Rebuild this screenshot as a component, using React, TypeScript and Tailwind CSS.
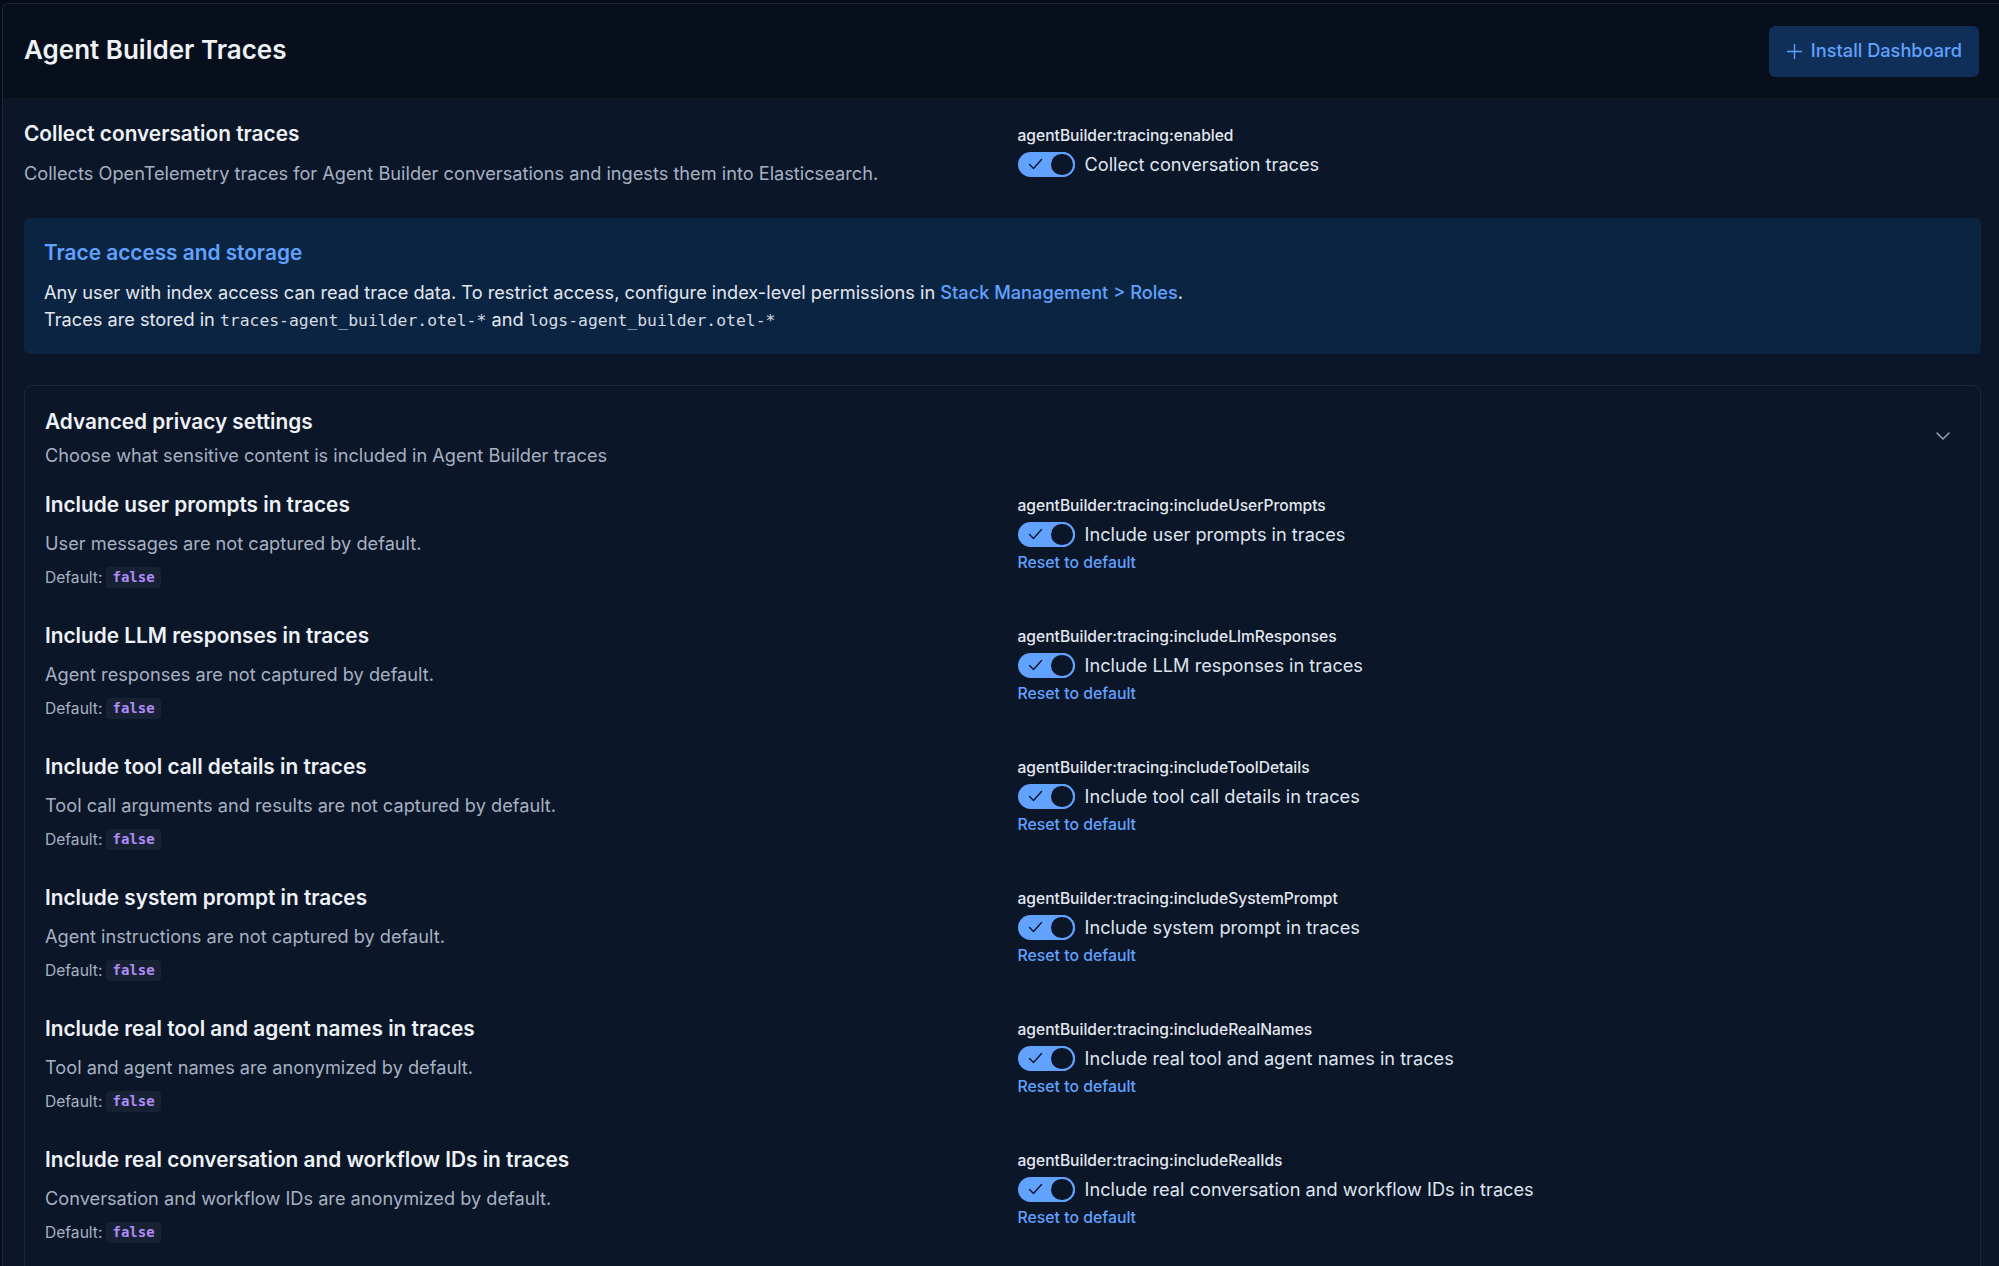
import React from "react";

const settings = [
  {
    title: "Include user prompts in traces",
    description: "User messages are not captured by default.",
    key: "agentBuilder:tracing:includeUserPrompts",
  },
  {
    title: "Include LLM responses in traces",
    description: "Agent responses are not captured by default.",
    key: "agentBuilder:tracing:includeLlmResponses",
  },
  {
    title: "Include tool call details in traces",
    description: "Tool call arguments and results are not captured by default.",
    key: "agentBuilder:tracing:includeToolDetails",
  },
  {
    title: "Include system prompt in traces",
    description: "Agent instructions are not captured by default.",
    key: "agentBuilder:tracing:includeSystemPrompt",
  },
  {
    title: "Include real tool and agent names in traces",
    description: "Tool and agent names are anonymized by default.",
    key: "agentBuilder:tracing:includeRealNames",
  },
  {
    title: "Include real conversation and workflow IDs in traces",
    description: "Conversation and workflow IDs are anonymized by default.",
    key: "agentBuilder:tracing:includeRealIds",
  },
];

const mono = "font-['DejaVu_Sans_Mono','Liberation_Mono',monospace]";

const Toggle = ({ label }: { label: string }) => (
  <div className="flex items-center gap-[10px] h-[25px]">
    <div className="relative w-[57px] h-[25px] rounded-full bg-[#61a2ff] shrink-0">
      <svg
        className="absolute left-[10px] top-[6px]"
        width="15"
        height="13"
        viewBox="0 0 15 13"
        fill="none"
      >
        <path d="M1.5 6.5l4 4 8-9" stroke="#0b1628" strokeWidth="1.4" strokeLinecap="round" strokeLinejoin="round" />
      </svg>
      <div className="absolute right-0 top-0 w-[26px] h-[25px] rounded-full bg-[#0b1628] border-2 border-[#61a2ff]" />
    </div>
    <span className="text-[18.2px] leading-[25px] text-[#dfe5ef]">{label}</span>
  </div>
);

const SettingRow = ({ title, description, settingKey }: { title: string; description: string; settingKey: string }) => (
  <div className="grid grid-cols-2 gap-x-[30px]">
    <div>
      <h4 className="text-[20.8px] leading-[24px] font-semibold text-[#eef2f7]">{title}</h4>
      <p className="mt-[13px] text-[18.2px] leading-[26px] text-[#a7b1c2]">{description}</p>
      <div className="mt-[11px] flex items-center gap-[4px] h-[21px]">
        <span className="text-[15.6px] text-[#a7b1c2]">Default:</span>
        <code className={`${mono} px-[6px] h-[21px] leading-[21px] rounded-[4px] bg-[#172134] text-[14px] font-bold text-[#b08cf7]`}>
          false
        </code>
      </div>
    </div>
    <div className="pt-[3px]">
      <div className="text-[15.6px] leading-[20px] font-medium text-[#e3e8f0]">{settingKey}</div>
      <div className="mt-[6px]">
        <Toggle label={title} />
      </div>
      <div className="mt-[6px] text-[15.8px] leading-[20px] font-medium text-[#61a2ff]">Reset to default</div>
    </div>
  </div>
);

export default function App() {
  return (
    <div className="min-h-screen bg-[#060b15] font-['Inter','Noto_Sans',sans-serif]">
      <div className="ml-[2px] pt-[3px]">
        <div className="min-h-[1263px] bg-[#0b1628] border-l border-t border-[#1c2739] rounded-tl-[6px] overflow-hidden">
          {/* Page header */}
          <header className="h-[94px] flex items-center justify-between pl-[21px] pr-[20px] bg-[#070f1d]">
            <h1 className="text-[26px] font-semibold text-[#eef2f7] pb-[3px]">Agent Builder Traces</h1>
            <button className="flex items-center gap-[8px] h-[51px] px-[17px] rounded-[6px] bg-[#0f2e58] text-[#61a2ff] text-[18.2px] font-medium">
              <svg width="17" height="17" viewBox="0 0 16 16" fill="none">
                <path d="M8 1.5v13M1.5 8h13" stroke="currentColor" strokeWidth="1.3" strokeLinecap="round" />
              </svg>
              Install Dashboard
            </button>
          </header>

          <div className="pl-[21px] pr-[18px]">
            {/* Master switch */}
            <div className="grid grid-cols-2 gap-x-[30px] pt-[24px]">
              <div>
                <h3 className="text-[20.8px] leading-[24px] font-semibold text-[#eef2f7]">Collect conversation traces</h3>
                <p className="mt-[14px] text-[18.2px] leading-[26px] text-[#a7b1c2]">
                  Collects OpenTelemetry traces for Agent Builder conversations and ingests them into Elasticsearch.
                </p>
              </div>
              <div className="pt-[4px]">
                <div className="text-[15.6px] leading-[20px] font-medium text-[#e3e8f0]">agentBuilder:tracing:enabled</div>
                <div className="mt-[6px]">
                  <Toggle label="Collect conversation traces" />
                </div>
              </div>
            </div>

            {/* Info callout */}
            <div className="mt-[32px] rounded-[6px] bg-[#0b2442] px-[20px] pt-[22px] pb-[20px]">
              <h3 className="text-[20.8px] leading-[26px] font-semibold text-[#61a2ff]">Trace access and storage</h3>
              <p className="mt-[13px] text-[18.2px] leading-[27px] text-[#e3e8f0]">
                Any user with index access can read trace data. To restrict access, configure index-level permissions in{" "}
                <a className="text-[#61a2ff] font-medium">Stack Management &gt; Roles</a>.
              </p>
              <p className="text-[18.2px] leading-[27px] text-[#e3e8f0]">
                Traces are stored in <code className={`${mono} text-[16.4px] text-[#d5dbe5]`}>traces-agent_builder.otel-*</code> and{" "}
                <code className={`${mono} text-[16.4px] text-[#d5dbe5]`}>logs-agent_builder.otel-*</code>
              </p>
            </div>

            {/* Advanced privacy accordion */}
            <div className="mt-[31px] rounded-t-[8px] border border-[#1c2739] px-[20px] pt-[24px] pb-[40px]">
              <div className="flex items-start justify-between">
                <div>
                  <h3 className="text-[20.8px] leading-[24px] font-semibold text-[#eef2f7]">Advanced privacy settings</h3>
                  <p className="mt-[8px] text-[18.2px] leading-[26px] text-[#a7b1c2]">
                    Choose what sensitive content is included in Agent Builder traces
                  </p>
                </div>
                <svg className="mt-[17px] mr-[8px]" width="18" height="18" viewBox="0 0 18 18" fill="none">
                  <path d="M3 6l6 6 6-6" stroke="#98a2b3" strokeWidth="1.5" strokeLinecap="round" strokeLinejoin="round" />
                </svg>
              </div>

              <div className="mt-[25px] flex flex-col gap-[36px]">
                {settings.map((s) => (
                  <SettingRow key={s.key} title={s.title} description={s.description} settingKey={s.key} />
                ))}
              </div>
            </div>
          </div>
        </div>
      </div>
    </div>
  );
}
